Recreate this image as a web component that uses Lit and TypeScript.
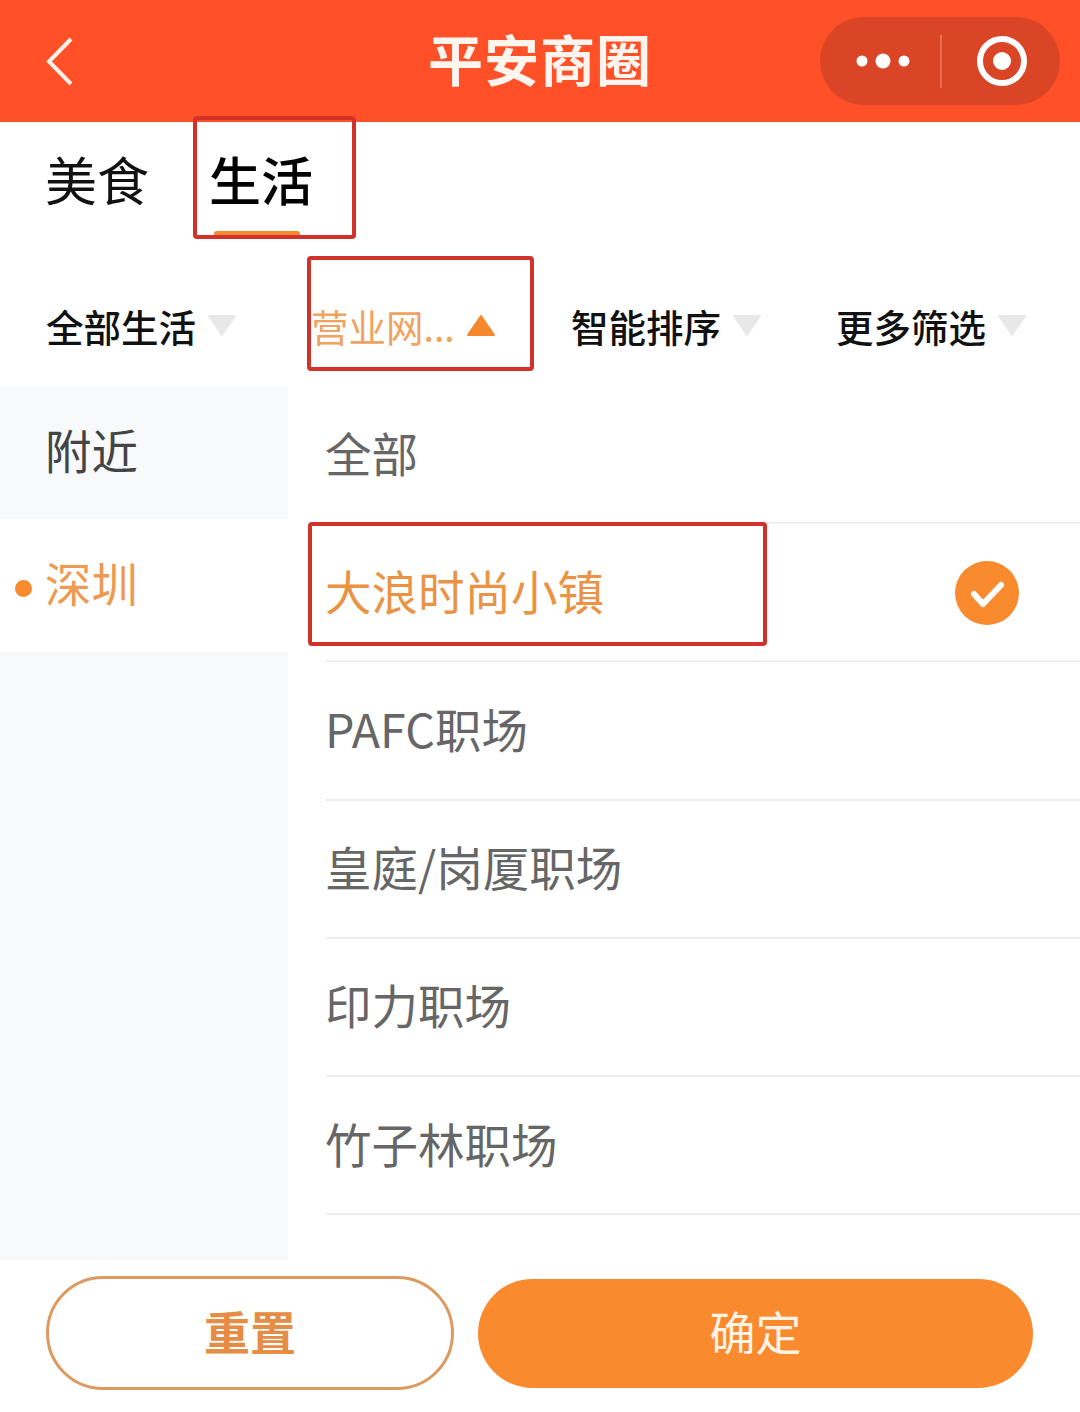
import { LitElement, html, css } from 'lit';
import { customElement } from 'lit/decorators.js';

const FILTERS = [
  { label: '全部生活', active: false, marked: false },
  { label: '营业网...', active: true, marked: true },
  { label: '智能排序', active: false, marked: false },
  { label: '更多筛选', active: false, marked: false },
];

const PLACES = ['全部', '大浪时尚小镇', 'PAFC职场', '皇庭/岗厦职场', '印力职场', '竹子林职场'];

@customElement('app-root')
export class AppRoot extends LitElement {
  static styles = css`
    :host {
      display: flex;
      flex-direction: column;
      width: 1080px;
      height: 1412px;
      overflow: hidden;
      background: #fff;
      font-family: 'Noto Sans CJK SC', 'Liberation Sans', sans-serif;
      color: #111;
    }

    /* red boxes drawn over the screenshot */
    .mark {
      position: absolute;
      box-sizing: border-box;
      border: 4px solid #d2322c;
      border-radius: 4px;
      pointer-events: none;
    }

    .header {
      flex: none;
      height: 122px;
      background: #ff5027;
      display: flex;
      align-items: center;
      justify-content: center;
      position: relative;
    }
    .title {
      font-size: 55px;
      font-weight: 700;
      color: #fff5ee;
      letter-spacing: 1px;
      padding-bottom: 8px;
    }
    .back {
      position: absolute;
      left: 44px;
      top: 36px;
    }
    .capsule {
      position: absolute;
      left: 820px;
      top: 17px;
      width: 240px;
      height: 88px;
      border-radius: 44px;
      background: #d94525;
    }

    .tabs {
      flex: none;
      height: 128px;
      display: flex;
      gap: 60px;
      padding: 0 0 0 45px;
      font-size: 52px;
      line-height: 114px;
    }
    .tab { position: relative; }
    .tab.active { font-weight: 500; color: #000; }
    .tab.active .line {
      position: absolute;
      left: 5px;
      right: 13px;
      top: 109px;
      height: 5px;
      background: #f58a33;
      border-radius: 3px 3px 0 0;
    }
    .tab.active .mark {
      left: -16px;
      right: -43px;
      top: -6px;
      height: 123px;
    }

    .filters {
      flex: none;
      height: 136px;
      display: grid;
      grid-template-columns: 265px 260px 265px 1fr;
      padding: 0 0 0 46px;
      font-size: 37.5px;
      font-weight: 500;
      color: #111;
    }
    .filter {
      position: relative;
      display: flex;
      align-items: center;
      gap: 11px;
      height: 150px;
      white-space: nowrap;
    }
    .filter.active { color: #f0a35e; font-weight: 400; }
    .filter .mark {
      left: -4px;
      top: 6px;
      width: 227px;
      height: 115px;
    }

    .body {
      flex: none;
      height: 874px;
      display: flex;
    }
    .side {
      flex: none;
      width: 288px;
      background: #f7f9fa;
      font-size: 46.5px;
    }
    .side-row {
      box-sizing: border-box;
      height: 133px;
      padding: 0 0 8px 45px;
      display: flex;
      align-items: center;
      color: #444;
      position: relative;
    }
    .side-row.active { background: #fff; color: #ee9a52; }
    .side-row .dot {
      position: absolute;
      left: 15px;
      top: 61px;
      width: 17px;
      height: 17px;
      border-radius: 50%;
      background: #f98a2e;
    }

    .list {
      flex: 1;
      padding-left: 38px;
      font-size: 46.5px;
      color: #666;
    }
    .item {
      position: relative;
      box-sizing: border-box;
      height: 138.2px;
      padding-bottom: 6px;
      display: flex;
      align-items: center;
      border-bottom: 2px solid #eee;
    }
    .item span.text { margin-left: -1px; }
    .item.active { color: #ea9344; }
    .item .mark {
      left: -18px;
      top: -2px;
      width: 459px;
      height: 124px;
    }
    .check {
      position: absolute;
      left: 629px;
      top: 37px;
    }

    .footer {
      flex: 1;
      display: flex;
      align-items: center;
      gap: 24px;
      padding: 0 47px 6px 46px;
      font-size: 46px;
    }
    .btn {
      box-sizing: border-box;
      display: flex;
      align-items: center;
      justify-content: center;
      border-radius: 57px;
      padding-bottom: 7px;
    }
    .reset {
      width: 408px;
      height: 114px;
      border: 3px solid #dc9a60;
      color: #e58c45;
      font-weight: 700;
    }
    .confirm {
      flex: 1;
      height: 109px;
      background: #f98a2e;
      color: #fff3e6;
    }
  `;

  private _triangle(active: boolean) {
    const fill = active ? '#f5882c' : '#e8e8e8';
    const points = active ? 'M15 2 L28 21 L2 21 Z' : 'M2 2 L28 2 L15 21 Z';
    return html`<svg width="30" height="24" viewBox="0 0 30 24" style="margin-top: 2px">
      <path d=${points} fill=${fill} stroke=${fill} stroke-width="2" stroke-linejoin="round"></path>
    </svg>`;
  }

  render() {
    return html`
      <div class="header">
        <svg class="back" width="32" height="52" viewBox="0 0 32 52">
          <path d="M27 3 L5 25.5 L27 48" fill="none" stroke="#fff0e8" stroke-width="4"></path>
        </svg>
        <div class="title">平安商圈</div>
        <svg class="capsule" viewBox="0 0 240 88">
          <circle cx="42" cy="44" r="5.5" fill="#fff"></circle>
          <circle cx="63" cy="44" r="7.5" fill="#fff"></circle>
          <circle cx="84" cy="44" r="5.5" fill="#fff"></circle>
          <line x1="121" y1="18" x2="121" y2="71" stroke="#e8704f" stroke-width="2"></line>
          <circle cx="182" cy="44" r="22" fill="none" stroke="#fff" stroke-width="6"></circle>
          <circle cx="182" cy="44" r="9" fill="#fff"></circle>
        </svg>
      </div>

      <div class="tabs">
        <div class="tab">美食</div>
        <div class="tab active">生活<span class="line"></span><span class="mark"></span></div>
      </div>

      <div class="filters">
        ${FILTERS.map(
          (f) => html`
            <div class="filter ${f.active ? 'active' : ''}">
              <span>${f.label}</span>
              ${this._triangle(f.active)}
              ${f.marked ? html`<span class="mark"></span>` : ''}
            </div>
          `
        )}
      </div>

      <div class="body">
        <div class="side">
          <div class="side-row">附近</div>
          <div class="side-row active"><span class="dot"></span>深圳</div>
        </div>
        <div class="list">
          ${PLACES.map(
            (p, i) => html`
              <div class="item ${i === 1 ? 'active' : ''}">
                <span class="text">${p}</span>
                ${i === 1
                  ? html`<span class="mark"></span>
                      <svg class="check" width="64" height="64" viewBox="0 0 64 64">
                        <circle cx="32" cy="32" r="32" fill="#f98a2e"></circle>
                        <path d="M19 33 L28 43 L46 24" fill="none" stroke="#fff" stroke-width="6" stroke-linecap="round" stroke-linejoin="round"></path>
                      </svg>`
                  : ''}
              </div>
            `
          )}
        </div>
      </div>

      <div class="footer">
        <div class="btn reset">重置</div>
        <div class="btn confirm">确定</div>
      </div>
    `;
  }
}
